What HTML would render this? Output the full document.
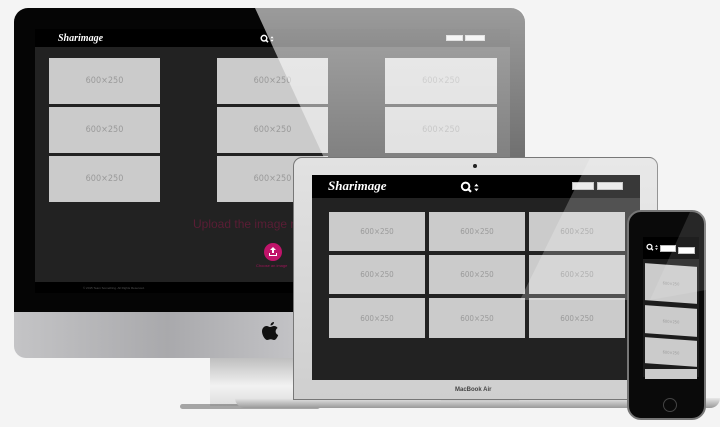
<!DOCTYPE html><html><head><style>
*{margin:0;padding:0;box-sizing:border-box}
body{width:720px;height:427px;background:#f4f4f4;position:relative;overflow:hidden;font-family:"Liberation Sans",sans-serif}
.a{position:absolute}
.t{position:absolute;background:#cbcbcb;color:#9a9a9a;display:flex;align-items:center;justify-content:center;font-family:"DejaVu Sans Condensed","Liberation Sans Narrow",sans-serif}
.logo{font-family:"Liberation Serif",serif;font-style:italic;font-weight:bold;color:#fff}
.btn{position:absolute;background:#e8e8e8;border:1px solid #bbb;font-size:3px;color:#777}
</style></head><body>
<svg width="0" height="0" style="position:absolute"><defs><symbol id="s" viewBox="0 0 20 12"><circle cx="5" cy="5" r="3.5" fill="none" stroke="#fff" stroke-width="1.8"/><path d="M7.5 7.5L10 10" stroke="#fff" stroke-width="2"/><path d="M13 5L15 2.5 17 5ZM13 7L15 9.5 17 7Z" fill="#fff"/></symbol></defs></svg>
<!-- iMac stand -->
<div class="a" style="left:210px;top:356px;width:95px;height:50px;background:linear-gradient(#bbb,#f2f2f2 60%,#ddd)"></div>
<div class="a" style="left:180px;top:404px;width:140px;height:5px;background:#555;border-radius:3px;opacity:.5"></div>
<!-- iMac chin -->
<div class="a" style="left:14px;top:300px;width:511px;height:58px;background:linear-gradient(90deg,#c4c4c6,#a9a9ac 30%,#c8c8cb 60%,#d0d0d2);border-radius:0 0 12px 12px"></div>
<svg class="a" style="left:260px;top:320px" width="20" height="24" viewBox="0 0 20 24"><path d="M14 2c0 2-1.5 3.5-3.5 3.5C10.5 3.5 12 2 14 2zM10 7c1.5 0 2.5-1 4-1 1.8 0 3 1 3.6 2-3 1.8-2.4 6 .6 7-.8 2.5-2.6 5-4 5-1.5 0-2-.8-3.5-.8S8.5 20 7 20C5 20 2 15 2 11.5 2 8 4.3 6 6.5 6 8 6 9 7 10 7z" fill="#111"/></svg>
<!-- iMac bezel -->
<div class="a" style="left:14px;top:8px;width:511px;height:304px;background:#050505;border-radius:14px 14px 0 0"></div>
<div class="a" style="left:35px;top:29px;width:475px;height:264px;background:#222"></div>
<div class="a" style="left:35px;top:29px;width:475px;height:18px;background:#000"></div>
<div class="a logo" style="left:58px;top:33px;font-size:10px">Sharimage</div>
<svg class="a" style="left:260px;top:34px" width="16" height="10"><use href="#s"/></svg>
<div class="t" style="left:49px;top:58px;width:111px;height:46px;font-size:9px">600×250</div>
<div class="t" style="left:49px;top:107px;width:111px;height:46px;font-size:9px">600×250</div>
<div class="t" style="left:49px;top:156px;width:111px;height:46px;font-size:9px">600×250</div>
<div class="t" style="left:217px;top:58px;width:111px;height:46px;font-size:9px">600×250</div>
<div class="t" style="left:217px;top:107px;width:111px;height:46px;font-size:9px">600×250</div>
<div class="t" style="left:217px;top:156px;width:111px;height:46px;font-size:9px">600×250</div>
<div class="t" style="left:385px;top:58px;width:112px;height:46px;font-size:9px">600×250</div>
<div class="t" style="left:385px;top:107px;width:112px;height:46px;font-size:9px">600×250</div>
<div class="a" style="left:193px;top:217px;font-size:12px;color:#5a1d35;white-space:nowrap">Upload the image re</div>
<div class="a" style="left:264px;top:243px;width:18px;height:18px;border-radius:50%;background:#c0146a"></div>
<svg class="a" style="left:267px;top:246px" width="12" height="12" viewBox="0 0 12 12"><path d="M6 1L3 4H5V7H7V4H9Z M2 7V10H10V7H9V9H3V7Z" fill="#fff"/></svg>
<div class="a" style="left:256px;top:263px;font-size:4px;color:#a01458">Choose an image</div>
<div class="a" style="left:35px;top:282px;width:475px;height:11px;background:#000"></div>
<div class="a" style="left:83px;top:286px;font-size:3px;color:#555">© 2015 Team Something. All Rights Reserved.</div>
<div class="btn" style="left:446px;top:35px;width:17px;height:6px"></div>
<div class="btn" style="left:465px;top:35px;width:20px;height:6px"></div>
<!-- glare -->
<svg class="a" style="left:0;top:0" width="720" height="427"><defs><linearGradient id="g" x1="0" y1="0" x2="0" y2="1"><stop offset="0" stop-color="#fff" stop-opacity=".6"/><stop offset="1" stop-color="#fff" stop-opacity=".25"/></linearGradient></defs><path d="M255 8H513Q525 8 525 20V312H395Z" fill="url(#g)"/></svg>
<!-- laptop base -->
<div class="a" style="left:235px;top:398px;width:485px;height:10px;background:linear-gradient(#e8e8e8,#999);border-radius:0 0 40px 40px"></div>
<div class="a" style="left:440px;top:398px;width:80px;height:4px;background:#ccc;border-radius:0 0 6px 6px"></div>
<!-- laptop -->
<div class="a" style="left:293px;top:157px;width:365px;height:243px;background:linear-gradient(#e2e2e2,#cfcfcf);border:1px solid #777;border-radius:9px 9px 0 0"></div>
<div class="a" style="left:473px;top:164px;width:4px;height:4px;border-radius:50%;background:#222"></div>
<div class="a" style="left:312px;top:175px;width:328px;height:205px;background:#222"></div>
<div class="a" style="left:312px;top:175px;width:328px;height:23px;background:#000"></div>
<div class="a logo" style="left:328px;top:178px;font-size:13px">Sharimage</div>
<svg class="a" style="left:460px;top:181px" width="22" height="13"><use href="#s"/></svg>
<div class="btn" style="left:572px;top:182px;width:22px;height:8px"></div>
<div class="btn" style="left:597px;top:182px;width:26px;height:8px"></div>
<div class="t" style="left:329px;top:212px;width:96px;height:39px;font-size:8px">600×250</div>
<div class="t" style="left:429px;top:212px;width:96px;height:39px;font-size:8px">600×250</div>
<div class="t" style="left:529px;top:212px;width:96px;height:39px;font-size:8px">600×250</div>
<div class="t" style="left:329px;top:255px;width:96px;height:39px;font-size:8px">600×250</div>
<div class="t" style="left:429px;top:255px;width:96px;height:39px;font-size:8px">600×250</div>
<div class="t" style="left:529px;top:255px;width:96px;height:39px;font-size:8px">600×250</div>
<div class="t" style="left:329px;top:298px;width:96px;height:40px;font-size:8px">600×250</div>
<div class="t" style="left:429px;top:298px;width:96px;height:40px;font-size:8px">600×250</div>
<div class="t" style="left:529px;top:298px;width:96px;height:40px;font-size:8px">600×250</div>
<svg class="a" style="left:0;top:0" width="720" height="427"><path d="M590 158H650Q658 158 658 166V300H520Z" fill="#fff" opacity=".22"/></svg>
<div class="a" style="left:455px;top:387px;font-size:6px;color:#444;font-weight:bold">MacBook Air</div>
<!-- phone -->
<div class="a" style="left:627px;top:210px;width:79px;height:210px;background:#0a0a0a;border:2px solid #777;border-radius:14px"></div>
<div class="a" style="left:643px;top:237px;width:56px;height:140px;background:#1c1c1c"></div>
<div class="a" style="left:643px;top:237px;width:56px;height:22px;background:#000"></div>
<svg class="a" style="left:646px;top:243px" width="14" height="9"><use href="#s"/></svg>
<div class="btn" style="left:660px;top:245px;width:16px;height:7px;background:#fff"></div>
<div class="btn" style="left:678px;top:247px;width:17px;height:7px;background:#fff"></div>
<div class="t" style="left:645px;top:265px;width:52px;height:37px;font-size:4px;transform:skewY(4deg)">600×250</div>
<div class="t" style="left:645px;top:307px;width:52px;height:28px;font-size:4px;transform:skewY(4deg)">600×250</div>
<div class="t" style="left:645px;top:339px;width:52px;height:26px;font-size:4px;transform:skewY(4deg)">600×250</div>
<div class="t" style="left:645px;top:369px;width:52px;height:10px;font-size:4px"></div>
<svg class="a" style="left:0;top:0" width="720" height="427"><path d="M690 212H700Q706 212 706 226V290L650 300Z" fill="#fff" opacity=".12"/></svg>
<div class="a" style="left:663px;top:398px;width:14px;height:14px;border-radius:50%;border:1px solid #444"></div>
</body></html>
